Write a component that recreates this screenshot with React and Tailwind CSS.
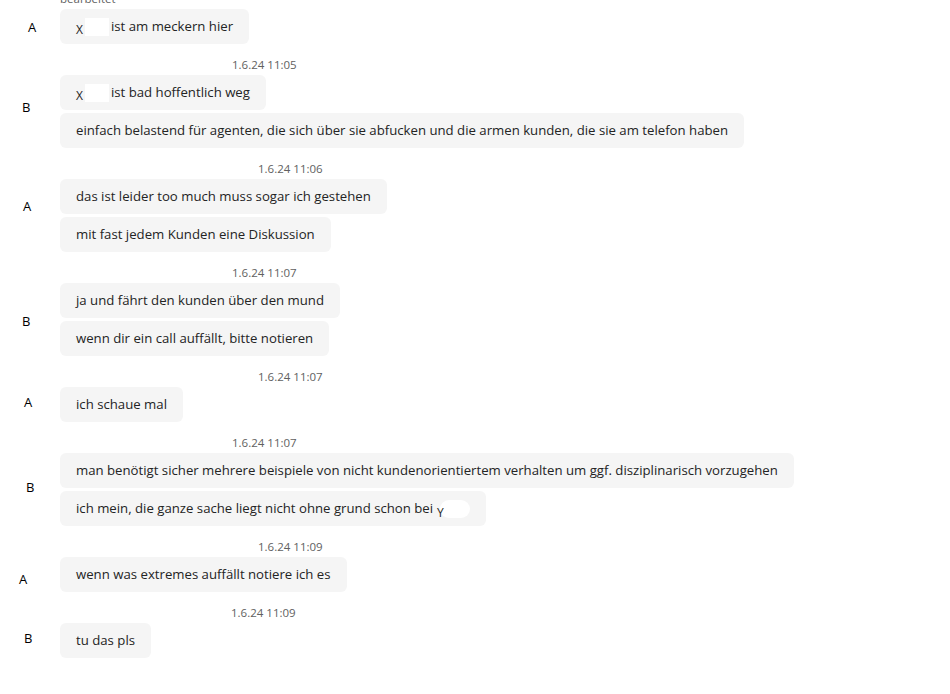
const font = { fontFamily: '"Open Sans", "Noto Sans", sans-serif' };

const Bubble = ({ children }) => (
  <div className="self-start h-[35px] px-4 flex items-center rounded-md bg-[#f5f5f5] text-[13.2px] text-[#242424] whitespace-nowrap">
    {children}
  </div>
);

const NameX = () => (
  <>
    <span className="mr-[2px] translate-y-[3px] inline-block text-[12px]">X</span>
    <span className="inline-block w-[24px] h-[18px] bg-white mr-[2px]" />
  </>
);

const groups = [
  {
    who: 'A', lx: 28, ly: 10, head: 'bearbeitet', hx: 0, first: true,
    msgs: [<><NameX />ist am meckern hier</>],
  },
  {
    who: 'B', lx: 22, ly: 24, head: '1.6.24 11:05', hx: 172,
    msgs: [
      <><NameX />ist bad hoffentlich weg</>,
      'einfach belastend für agenten, die sich über sie abfucken und die armen kunden, die sie am telefon haben',
    ],
  },
  {
    who: 'A', lx: 23, ly: 19, head: '1.6.24 11:06', hx: 198,
    msgs: ['das ist leider too much muss sogar ich gestehen', 'mit fast jedem Kunden eine Diskussion'],
  },
  {
    who: 'B', lx: 22, ly: 30, head: '1.6.24 11:07', hx: 172,
    msgs: ['ja und fährt den kunden über den mund', 'wenn dir ein call auffällt, bitte notieren'],
  },
  { who: 'A', lx: 24, ly: 7, head: '1.6.24 11:07', hx: 198, msgs: ['ich schaue mal'] },
  {
    who: 'B', lx: 26, ly: 26, head: '1.6.24 11:07', hx: 172,
    msgs: [
      'man benötigt sicher mehrere beispiele von nicht kundenorientiertem verhalten um ggf. disziplinarisch vorzugehen',
      <>ich mein, die ganze sache liegt nicht ohne grund schon bei<span className="ml-[4px] translate-y-[4px] inline-block text-[12px]">Y</span><span className="inline-block w-[30px] h-[18px] bg-white rounded-full -ml-[4px]" /></>,
    ],
  },
  { who: 'A', lx: 19, ly: 14, head: '1.6.24 11:09', hx: 198, msgs: ['wenn was extremes auffällt notiere ich es'] },
  { who: 'B', lx: 24, ly: 7, head: '1.6.24 11:09', hx: 171, msgs: ['tu das pls'] },
];

export default function App() {
  return (
    <div className="w-[950px] h-[694px] bg-white overflow-hidden" style={font}>
      {groups.map((g, i) => (
        <div key={i} className={`flex ${g.first ? '-mt-[9px]' : 'mt-[13px]'}`}>
          <div className="w-[60px] shrink-0 pt-[18px]">
            <div
              className="text-[13px] leading-[16px] text-black"
              style={{ marginLeft: g.lx, marginTop: g.ly }}
            >
              {g.who}
            </div>
          </div>
          <div className="flex flex-col">
            <div
              className="h-[16px] mb-[2px] text-[11.5px] leading-[16px] text-[#616161]"
              style={{ marginLeft: g.hx }}
            >
              {g.head}
            </div>
            <div className="flex flex-col gap-[3px]">
              {g.msgs.map((m, j) => (
                <Bubble key={j}>{m}</Bubble>
              ))}
            </div>
          </div>
        </div>
      ))}
    </div>
  );
}
